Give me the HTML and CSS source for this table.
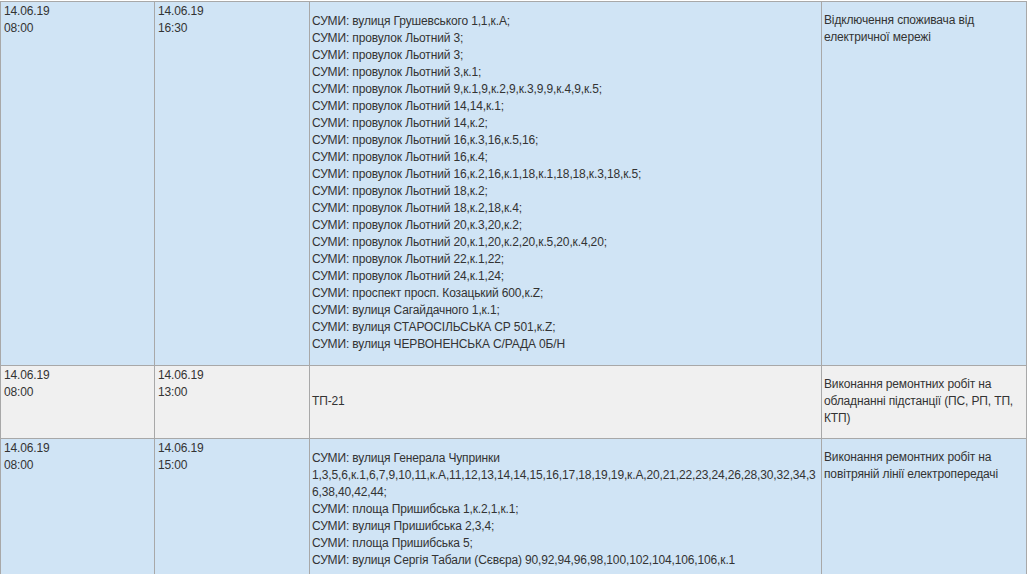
FILE: index.html
```html
<!DOCTYPE html>
<html lang="uk">
<head>
<meta charset="utf-8">
<title>Відключення</title>
<link rel="stylesheet" href="styles.css">
</head>
<body>
<div class="wrap">
<table class="outages">
  <colgroup>
    <col class="c-date">
    <col class="c-date2">
    <col class="c-addr">
    <col class="c-desc">
  </colgroup>
  <tbody>
    <tr class="row-blue">
      <td class="date">14.06.19<br>08:00</td>
      <td class="date">14.06.19<br>16:30</td>
      <td class="addr">СУМИ: вулиця Грушевського 1,1,к.А;<br>СУМИ: провулок Льотний 3;<br>СУМИ: провулок Льотний 3;<br>СУМИ: провулок Льотний 3,к.1;<br>СУМИ: провулок Льотний 9,к.1,9,к.2,9,к.3,9,9,к.4,9,к.5;<br>СУМИ: провулок Льотний 14,14,к.1;<br>СУМИ: провулок Льотний 14,к.2;<br>СУМИ: провулок Льотний 16,к.3,16,к.5,16;<br>СУМИ: провулок Льотний 16,к.4;<br>СУМИ: провулок Льотний 16,к.2,16,к.1,18,к.1,18,18,к.3,18,к.5;<br>СУМИ: провулок Льотний 18,к.2;<br>СУМИ: провулок Льотний 18,к.2,18,к.4;<br>СУМИ: провулок Льотний 20,к.3,20,к.2;<br>СУМИ: провулок Льотний 20,к.1,20,к.2,20,к.5,20,к.4,20;<br>СУМИ: провулок Льотний 22,к.1,22;<br>СУМИ: провулок Льотний 24,к.1,24;<br>СУМИ: проспект просп. Козацький 600,к.Z;<br>СУМИ: вулиця Сагайдачного 1,к.1;<br>СУМИ: вулиця СТАРОСІЛЬСЬКА СР 501,к.Z;<br>СУМИ: вулиця ЧЕРВОНЕНСЬКА С/РАДА 0Б/Н</td>
      <td class="desc">Відключення споживача від електричної мережі</td>
    </tr>
    <tr class="row-gray">
      <td class="date">14.06.19<br>08:00</td>
      <td class="date">14.06.19<br>13:00</td>
      <td class="addr">ТП-21</td>
      <td class="desc">Виконання ремонтних робіт на обладнанні підстанції (ПС, РП, ТП, КТП)</td>
    </tr>
    <tr class="row-blue">
      <td class="date">14.06.19<br>08:00</td>
      <td class="date">14.06.19<br>15:00</td>
      <td class="addr">СУМИ: вулиця Генерала Чупринки 1,3,5,6,к.1,6,7,9,10,11,к.А,11,12,13,14,14,15,16,17,18,19,19,к.А,20,21,22,23,24,26,28,30,32,34,36,38,40,42,44;<br>СУМИ: площа Пришибська 1,к.2,1,к.1;<br>СУМИ: вулиця Пришибська 2,3,4;<br>СУМИ: площа Пришибська 5;<br>СУМИ: вулиця Сергія Табали (Сєвєра) 90,92,94,96,98,100,102,104,106,106,к.1</td>
      <td class="desc">Виконання ремонтних робіт на повітряній лінії електропередачі</td>
    </tr>
  </tbody>
</table>
</div>
</body>
</html>
```

FILE: styles.css
```css
html, body {
  margin: 0;
  padding: 0;
  background: #ffffff;
}
.wrap {
  padding-top: 1px;
}
.outages {
  border-collapse: collapse;
  table-layout: fixed;
  width: 1026px;
  font-family: "Liberation Sans", Arial, sans-serif;
  font-size: 12px;
  line-height: 17px;
  letter-spacing: -0.14px;
  color: #333333;
}
.c-date { width: 154px; }
.c-date2 { width: 155px; }
.c-addr { width: 512px; }
.c-desc { width: 205px; }
.outages td {
  border: 1px solid #a8a8a8;
  overflow-wrap: anywhere;
}
.row-blue td { background: #d0e4f5; }
.row-gray td { background: #f0f0f0; }
.date {
  vertical-align: top;
  padding: 1px 3px;
}
.addr {
  vertical-align: middle;
  padding: 11px 2px 12px;
}
.desc {
  vertical-align: top;
  padding: 10px 2px 11px;
}
```
